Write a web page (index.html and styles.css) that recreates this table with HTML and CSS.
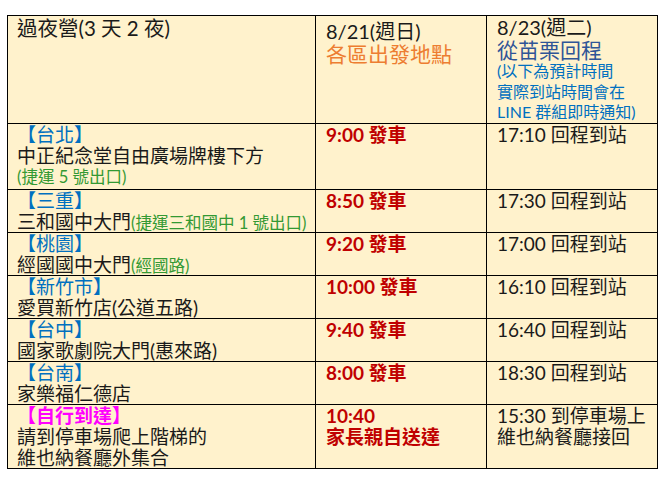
FILE: index.html
```html
<!DOCTYPE html>
<html lang="zh-Hant">
<head>
<meta charset="utf-8">
<title>過夜營</title>
<link rel="stylesheet" href="styles.css">
</head>
<body>
<table class="schedule">
  <colgroup>
    <col class="col-place">
    <col class="col-go">
    <col class="col-back">
  </colgroup>
  <tr class="head">
    <td><div class="title">過夜營(3 天 2 夜)</div></td>
    <td class="go-head">
      <div class="date">8/21(週日)</div>
      <div class="big orange">各區出發地點</div>
    </td>
    <td class="back-head">
      <div class="date">8/23(週二)</div>
      <div class="big navy">從苗栗回程</div>
      <div class="note">(以下為預計時間<br>實際到站時間會在<br>LINE 群組即時通知)</div>
    </td>
  </tr>
  <tr>
    <td><div class="area">【台北】</div><div>中正紀念堂自由廣場牌樓下方</div><div class="green line-green">(捷運 5 號出口)</div></td>
    <td><div class="time">9:00 發車</div></td>
    <td><div>17:10 回程到站</div></td>
  </tr>
  <tr>
    <td><div class="area">【三重】</div><div>三和國中大門<span class="green">(捷運三和國中 1 號出口)</span></div></td>
    <td><div class="time">8:50 發車</div></td>
    <td><div>17:30 回程到站</div></td>
  </tr>
  <tr>
    <td><div class="area">【桃園】</div><div>經國國中大門<span class="green">(經國路)</span></div></td>
    <td><div class="time">9:20 發車</div></td>
    <td><div>17:00 回程到站</div></td>
  </tr>
  <tr>
    <td><div class="area">【新竹市】</div><div>愛買新竹店(公道五路)</div></td>
    <td><div class="time">10:00 發車</div></td>
    <td><div>16:10 回程到站</div></td>
  </tr>
  <tr>
    <td><div class="area">【台中】</div><div>國家歌劇院大門(惠來路)</div></td>
    <td><div class="time">9:40 發車</div></td>
    <td><div>16:40 回程到站</div></td>
  </tr>
  <tr>
    <td><div class="area">【台南】</div><div>家樂福仁德店</div></td>
    <td><div class="time">8:00 發車</div></td>
    <td><div>18:30 回程到站</div></td>
  </tr>
  <tr class="last">
    <td><div class="self">【自行到達】</div><div>請到停車場爬上階梯的</div><div>維也納餐廳外集合</div></td>
    <td><div class="time">10:40</div><div class="time">家長親自送達</div></td>
    <td><div>15:30 到停車場上</div><div>維也納餐廳接回</div></td>
  </tr>
</table>
</body>
</html>
```

FILE: styles.css
```css
html, body {
  margin: 0;
  padding: 0;
  background: #ffffff;
}

body {
  font-family: "Lato", "Noto Sans CJK TC", sans-serif;
  color: #1a1a1a;
}

.schedule {
  margin: 15px 0 0 7px;
  border-collapse: collapse;
  table-layout: fixed;
  width: 651px;
  background: #fff2cc;
}

.col-place { width: 308px; }
.col-go { width: 171px; }
.col-back { width: 171px; }

.schedule td {
  border: 1px solid #000000;
  vertical-align: top;
  padding: 0 6px 0 10px;
  font-size: 19px;
  line-height: 21px;
  white-space: nowrap;
}

.schedule td:first-child {
  padding-left: 9px;
}

.title {
  font-size: 20.5px;
  line-height: 22px;
  padding-top: 1px;
}

.date {
  font-size: 20px;
  line-height: 22px;
}

.go-head .date {
  padding-top: 4px;
}

.big {
  font-size: 21px;
  line-height: 23px;
}

.orange { color: #ed7d31; }
.navy { color: #2f5597; }

.note {
  color: #0070c0;
  font-size: 16px;
  line-height: 20.5px;
}

.area { color: #0070c0; }

.self {
  color: #ff00ff;
  font-weight: bold;
}

.green {
  color: #339933;
  font-size: 16.5px;
  line-height: 16px;
}

.line-green {
  line-height: 23px;
}

.time {
  color: #c00000;
  font-weight: bold;
}
```
